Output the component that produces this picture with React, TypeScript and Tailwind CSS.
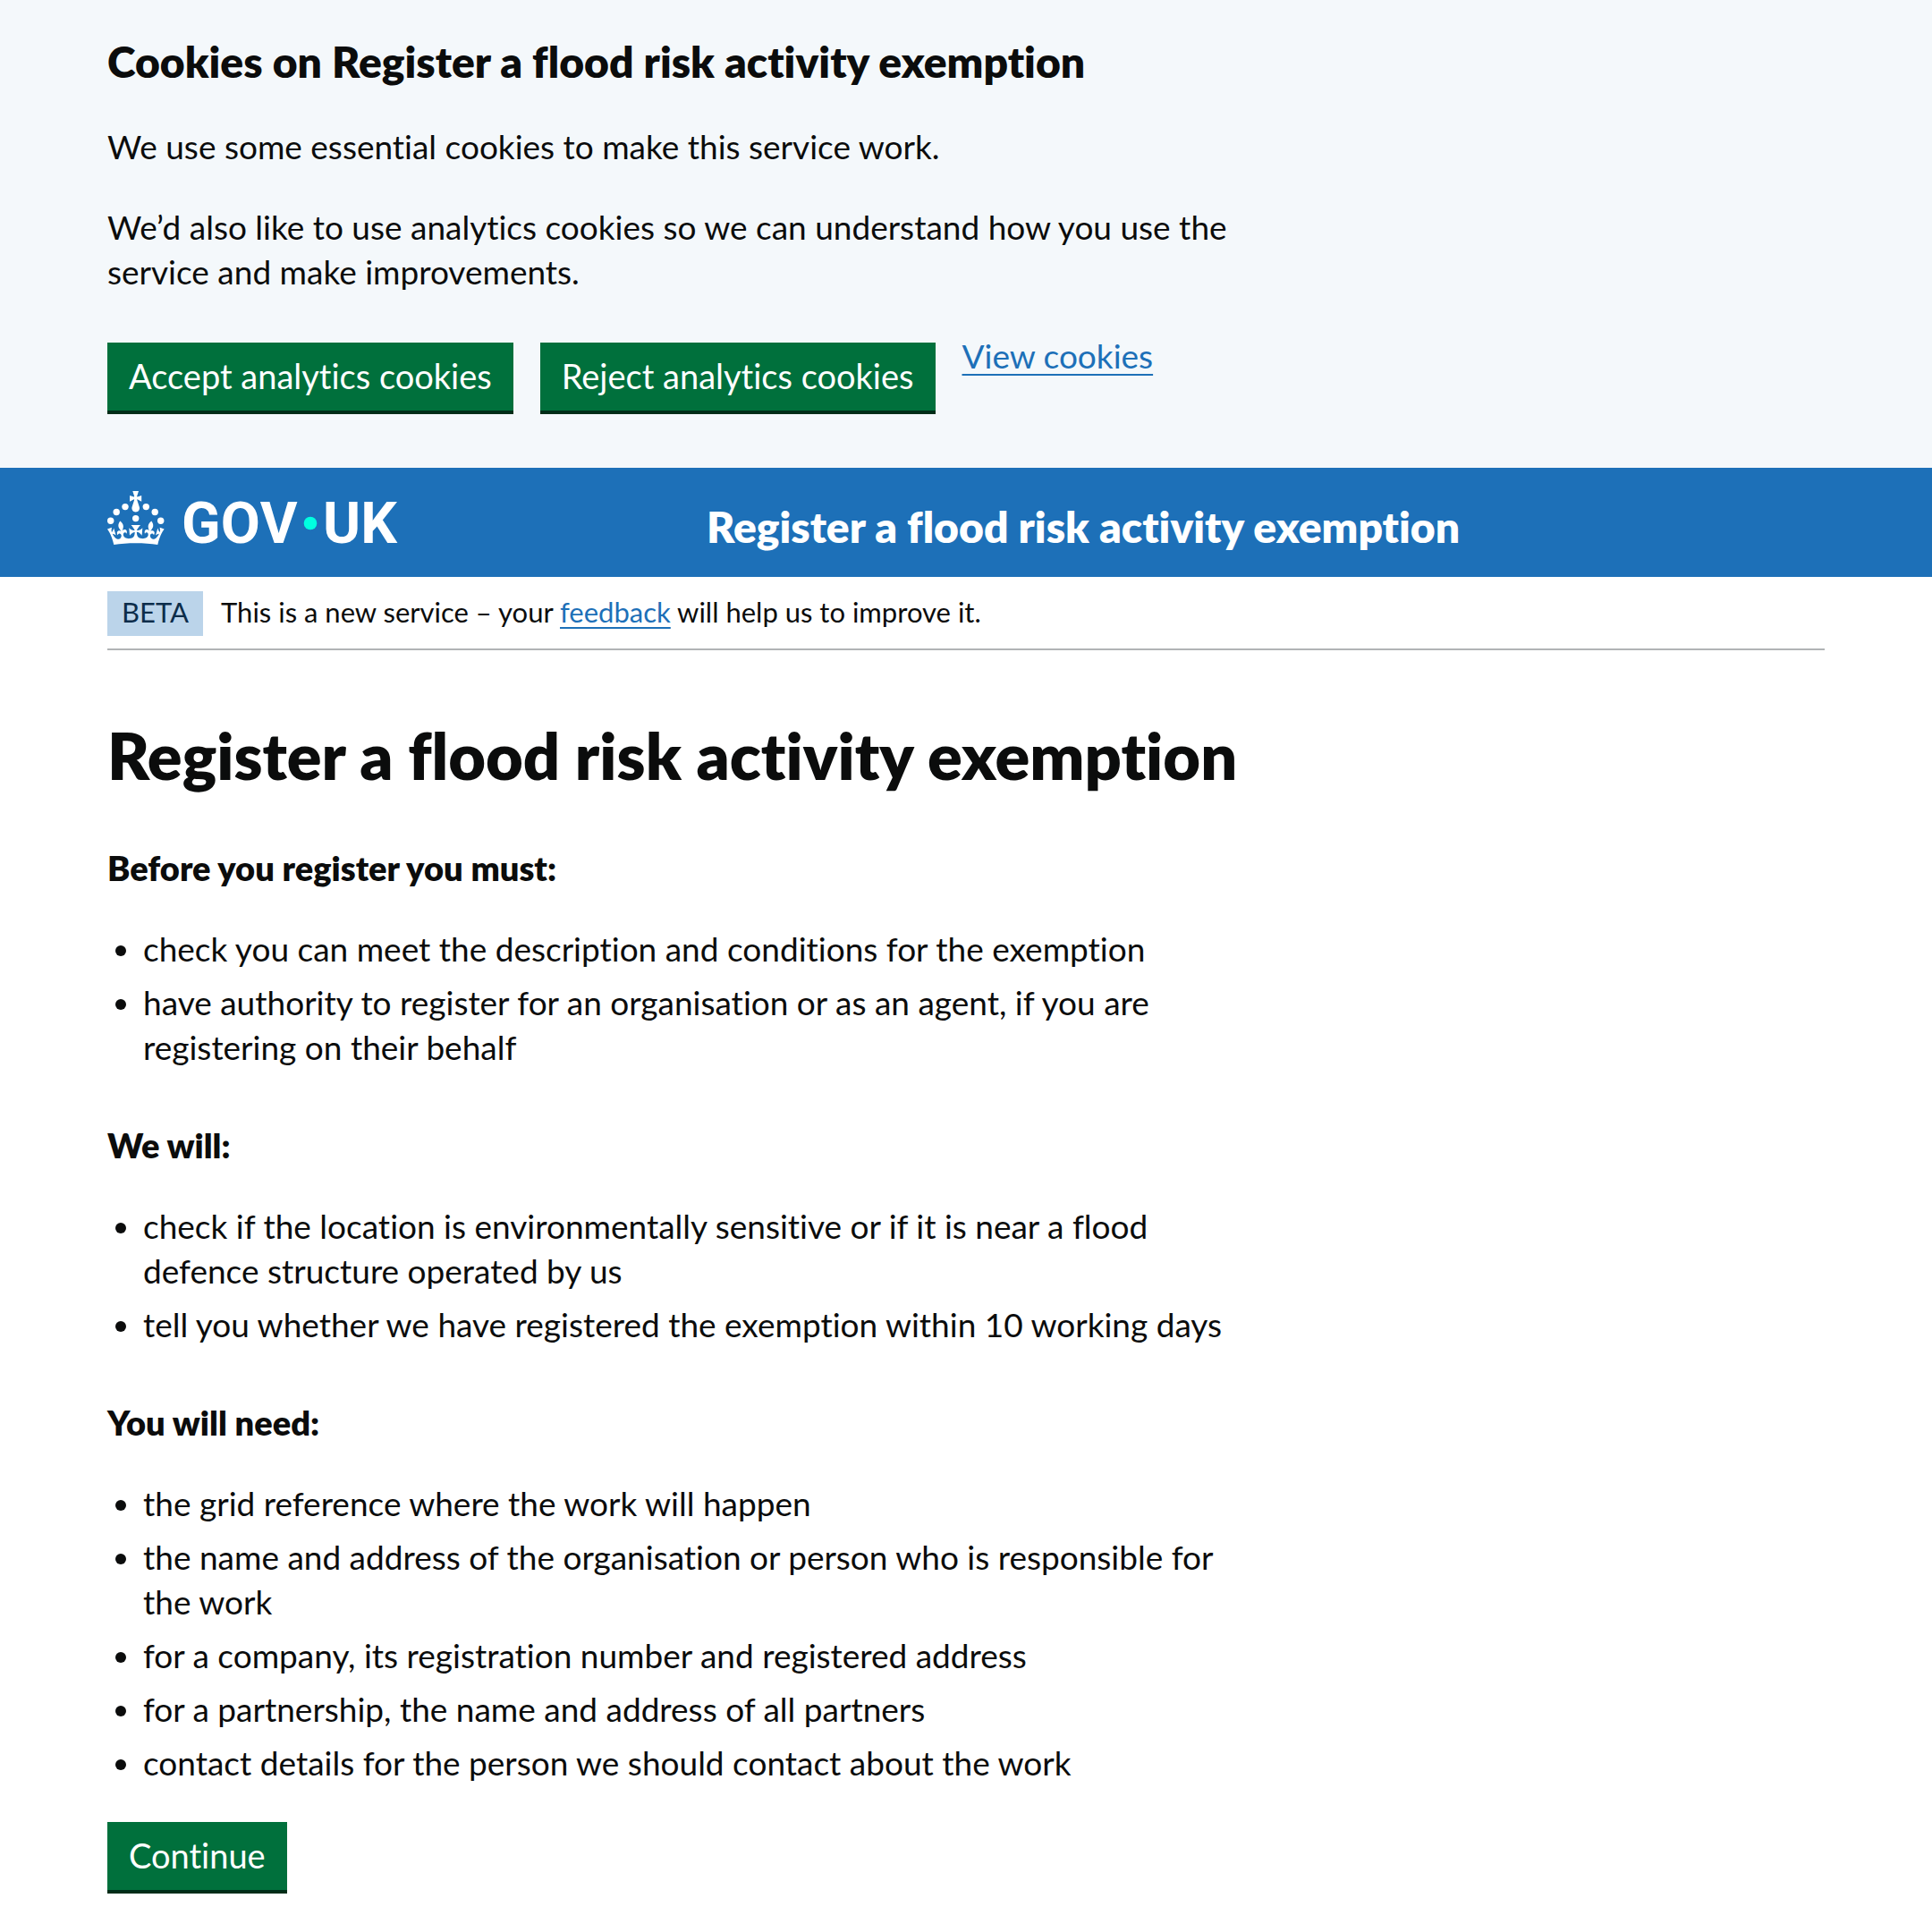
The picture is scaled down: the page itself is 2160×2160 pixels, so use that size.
import type { ReactNode } from "react";

const SERVICE_NAME = "Register a flood risk activity exemption";

const sections = [
  {
    title: "Before you register you must:",
    items: [
      "check you can meet the description and conditions for the exemption",
      "have authority to register for an organisation or as an agent, if you are registering on their behalf",
    ],
  },
  {
    title: "We will:",
    items: [
      "check if the location is environmentally sensitive or if it is near a flood defence structure operated by us",
      "tell you whether we have registered the exemption within 10 working days",
    ],
  },
  {
    title: "You will need:",
    items: [
      "the grid reference where the work will happen",
      "the name and address of the organisation or person who is responsible for the work",
      "for a company, its registration number and registered address",
      "for a partnership, the name and address of all partners",
      "contact details for the person we should contact about the work",
    ],
  },
];

function Container({ children }: { children: ReactNode }) {
  return <div className="mx-auto max-w-[1920px]">{children}</div>;
}

function Button({ children }: { children: ReactNode }) {
  return (
    <button
      type="button"
      className="cursor-pointer bg-[#00703c] px-6 pt-3 pb-[14px] text-[38px] leading-[50px] text-white shadow-[0_4px_0_#002d18]"
    >
      {children}
    </button>
  );
}

function Logo() {
  return (
    <svg viewBox="0 0 324 60" className="h-[60px] w-[324px] overflow-visible" fill="currentColor" role="img" aria-label="GOV.UK">
      <circle cx="20" cy="17.6" r="3.7" />
      <circle cx="10.2" cy="23.5" r="3.7" />
      <circle cx="3.7" cy="33.2" r="3.7" />
      <circle cx="31.7" cy="30.6" r="3.7" />
      <circle cx="43.3" cy="17.6" r="3.7" />
      <circle cx="53.2" cy="23.5" r="3.7" />
      <circle cx="59.7" cy="33.2" r="3.7" />
      <path d="M33.1,9.8c.2-.1.3-.3.5-.5l4.6,2.4v-6.8l-4.6,1.5c-.1-.2-.3-.3-.5-.5l1.9-5.9h-6.7l1.9,5.9c-.2.1-.3.3-.5.5l-4.6-1.5v6.8l4.6-2.4c.1.2.3.3.5.5l-2.6,8c-.9,2.8,1.2,5.7,4.1,5.7h0c3,0,5.1-2.9,4.1-5.7l-2.6-8ZM37,37.9s-3.4,3.8-4.1,6.1c2.2,0,4.2-.5,6.4-2.8l-.7,8.5c-2-2.8-4.4-4.1-5.7-3.8.1,3.1.5,6.7,5.8,7.2,3.7.3,6.7-1.5,7-3.8.4-2.6-2-4.3-3.7-1.6-1.4-4.5,2.4-6.1,4.9-3.2-1.9-4.5-1.8-7.7,2.4-10.9,3,4,2.6,7.3-1.2,11.1,2.4-1.3,6.2,0,4,4.6-1.2-2.8-3.7-2.2-4.2.2-.3,1.7.7,3.7,3,4.2,1.9.3,4.7-.9,7-5.9-1.3,0-2.4.7-3.9,1.7l2.4-8c.6,2.3,1.4,3.7,2.2,4.5.6-1.6.5-2.8,0-5.3l5,1.8c-2.6,3.6-5.2,8.7-7.3,17.5-7.4-1.1-15.7-1.7-24.5-1.7h0c-8.8,0-17.1.6-24.5,1.7-2.1-8.9-4.7-13.9-7.3-17.5l5-1.8c-.5,2.5-.6,3.7,0,5.3.8-.8,1.6-2.3,2.2-4.5l2.4,8c-1.5-1-2.6-1.7-3.9-1.7,2.3,5,5.2,6.2,7,5.9,2.3-.4,3.3-2.4,3-4.2-.5-2.4-3-3.1-4.2-.2-2.2-4.6,1.6-6,4-4.6-3.7-3.7-4.2-7.1-1.2-11.1,4.2,3.2,4.3,6.4,2.4,10.9,2.5-2.8,6.3-1.3,4.9,3.2-1.8-2.7-4.1-1-3.7,1.6.3,2.3,3.3,4.1,7,3.8,5.4-.5,5.7-4.2,5.8-7.2-1.3-.2-3.7,1-5.7,3.8l-.7-8.5c2.2,2.3,4.2,2.7,6.4,2.8-.7-2.3-4.1-6.1-4.1-6.1h10.6,0Z" />
      <text x="83" y="58" className="font-['Roboto'] text-[64px] font-bold [font-kerning:none]">
        GOV
      </text>
      <circle cx="227" cy="36" r="7.3" fill="#00ffe0" />
      <text x="241" y="58" className="font-['Roboto'] text-[64px] font-bold [font-kerning:none]">
        UK
      </text>
    </svg>
  );
}

export default function App() {
  return (
    <div className="min-h-screen bg-white font-['Lato','Liberation_Sans',sans-serif] text-[37px] leading-[50px] text-[#0b0c0c] [font-variant-ligatures:no-common-ligatures]">
      <section aria-label={`Cookies on ${SERVICE_NAME}`} className="bg-[#f4f8fb] px-[120px] pt-[39px] pb-16">
        <Container>
          <div className="flex max-w-[1270px] flex-col gap-10">
            <h2 className="text-[48px] leading-[60px] font-extrabold">Cookies on {SERVICE_NAME}</h2>
            <p>We use some essential cookies to make this service work.</p>
            <p>We’d also like to use analytics cookies so we can understand how you use the service and make improvements.</p>
          </div>
          <div className="mt-11 flex flex-wrap gap-x-[30px]">
            <div className="flex gap-[30px] pt-[10px]">
              <Button>Accept analytics cookies</Button>
              <Button>Reject analytics cookies</Button>
            </div>
            <a href="#cookies" className="self-start text-[#1d70b8] underline decoration-2 underline-offset-[6px]">
              View cookies
            </a>
          </div>
        </Container>
      </section>

      <header className="bg-[#1d70b8] px-[120px] pt-[26px] pb-9 text-white">
        <Container>
          <div className="flex h-[60px] items-start">
            <a href="#home" className="w-1/3 shrink-0">
              <Logo />
            </a>
            <a href="#service" className="pt-[10px] pl-[30px] text-[48px] leading-[60px] font-extrabold">
              {SERVICE_NAME}
            </a>
          </div>
        </Container>
      </header>

      <div className="px-[120px] pb-10">
        <Container>
          <div className="flex items-start gap-5 border-b-2 border-[#b1b4b6] pt-4 pb-[14px] text-[31px] leading-[46px]">
            <strong className="bg-[#bbd4ea] px-4 pb-1 font-normal text-[#0c2d4a]">BETA</strong>
            <p>
              This is a new service – your{" "}
              <a href="#feedback" className="text-[#1d70b8] underline decoration-2 underline-offset-[5px]">
                feedback
              </a>{" "}
              will help us to improve it.
            </p>
          </div>

          <main className="max-w-[1270px] pt-20">
            <h1 className="text-[72px] leading-[74px] font-extrabold">{SERVICE_NAME}</h1>
            <div className="mt-[65px] flex flex-col gap-[60px]">
              {sections.map((section) => (
                <section key={section.title}>
                  <h2 className="text-[38px] leading-[48px] font-extrabold">{section.title}</h2>
                  <ul className="mt-[42px] flex list-disc flex-col gap-[10px] pl-10">
                    {section.items.map((item) => (
                      <li key={item}>{item}</li>
                    ))}
                  </ul>
                </section>
              ))}
            </div>
            <div className="mt-[41px]">
              <Button>Continue</Button>
            </div>
          </main>
        </Container>
      </div>
    </div>
  );
}
